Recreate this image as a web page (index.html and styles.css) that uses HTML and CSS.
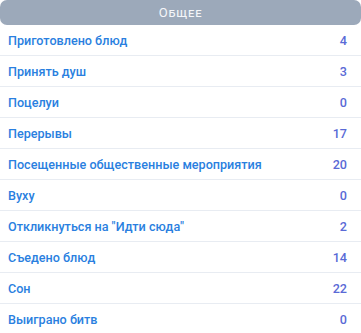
FILE: index.html
```html
<!DOCTYPE html>
<html lang="ru">
<head>
<meta charset="utf-8">
<link rel="stylesheet" href="styles.css">
</head>
<body>
<div class="panel">
  <div class="header">Общее</div>
  <div class="row"><span class="label">Приготовлено блюд</span><span class="value">4</span></div>
  <div class="row"><span class="label">Принять душ</span><span class="value">3</span></div>
  <div class="row"><span class="label">Поцелуи</span><span class="value">0</span></div>
  <div class="row"><span class="label">Перерывы</span><span class="value">17</span></div>
  <div class="row"><span class="label">Посещенные общественные мероприятия</span><span class="value">20</span></div>
  <div class="row"><span class="label">Вуху</span><span class="value">0</span></div>
  <div class="row"><span class="label">Откликнуться на "Идти сюда"</span><span class="value">2</span></div>
  <div class="row"><span class="label">Съедено блюд</span><span class="value">14</span></div>
  <div class="row"><span class="label">Сон</span><span class="value">22</span></div>
  <div class="row"><span class="label">Выиграно битв</span><span class="value">0</span></div>
</div>
</body>
</html>
```
FILE: styles.css
```css
html, body { margin: 0; padding: 0; background: #ffffff; }
body { font-family: Roboto, "Noto Sans", sans-serif; }
.panel { width: 361px; display: flex; flex-direction: column; }
.header {
  height: 25px;
  background: #9ca9ba;
  border-radius: 7px;
  color: #f4f6f9;
  font-variant: small-caps;
  font-size: 13px;
  font-weight: 400;
  letter-spacing: 0.8px;
  display: flex;
  align-items: center;
  justify-content: center;
}
.row {
  height: 30px;
  border-bottom: 1px solid #e8ecf2;
  display: flex;
  align-items: center;
  justify-content: space-between;
  padding: 0 14px 0 8px;
  font-size: 12.6px;
  font-weight: 500;
}
.row:last-child { border-bottom: none; }
.label { color: #2a7fe0; }
.value { color: #5a6ad6; }
```
